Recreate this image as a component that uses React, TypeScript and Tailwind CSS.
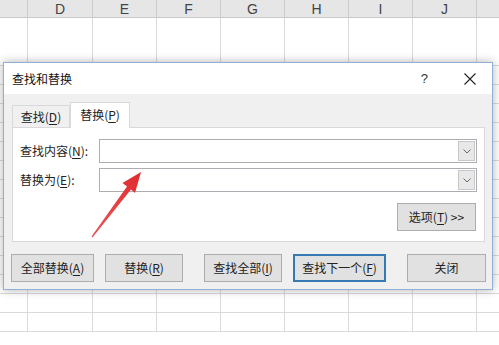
import React from "react";

const cols = [
  { name: "", w: "w-[28px]" },
  { name: "D", w: "w-[65px]" },
  { name: "E", w: "w-[64px]" },
  { name: "F", w: "w-[64px]" },
  { name: "G", w: "w-[64px]" },
  { name: "H", w: "w-[64px]" },
  { name: "I", w: "w-[64px]" },
  { name: "J", w: "w-[64px]" },
  { name: "", w: "w-[40px]" },
];

const rowHeights = ["h-[48px]", ...Array(14).fill("h-[19px]")];

const font = { fontFamily: '"Noto Sans CJK SC", "Noto Sans", sans-serif' };

const Sheet = () => (
  <div className="flex flex-col">
    <div className="flex h-[18px] bg-[#e6e6e6] border-b border-[#c9c9c9]">
      {cols.map((c, i) => (
        <div
          key={i}
          className={`${c.w} shrink-0 border-r border-[#cdcdcd] flex items-center justify-center text-[14px] text-[#444] leading-none`}
          style={{ fontFamily: '"Liberation Sans", sans-serif' }}
        >
          {c.name}
        </div>
      ))}
    </div>
    {rowHeights.map((h, r) => (
      <div key={r} className={`flex ${h} border-b border-[#dadada]`}>
        {cols.map((c, i) => (
          <div key={i} className={`${c.w} shrink-0 border-r border-[#dadada]`} />
        ))}
      </div>
    ))}
  </div>
);

const Combo = () => (
  <div className="flex w-[378px] h-[24px] border border-[#abadb3] bg-white">
    <div className="flex-1" />
    <div className="w-[17px] m-[1px] ml-0 bg-[#e8e8e8] border border-[#c8c8c8] flex items-center justify-center">
      <svg width="8" height="5" viewBox="0 0 8 5">
        <path d="M0.5 0.5 L4 4 L7.5 0.5" fill="none" stroke="#666" strokeWidth="1" />
      </svg>
    </div>
  </div>
);

const Btn = ({ children, className = "", focus = false }: { children: React.ReactNode; className?: string; focus?: boolean }) => (
  <div
    className={`h-[28px] flex items-center justify-center text-[12px] text-[#222] bg-[#e1e1e1] ${
      focus ? "border-2 border-[#3679b5]" : "border border-[#adadad]"
    } ${className}`}
  >
    {children}
  </div>
);

const U = ({ children }: { children: React.ReactNode }) => <span className="underline underline-offset-2">{children}</span>;

const Dialog = () => (
  <div
    className="absolute left-[3px] top-[62px] w-[490px] h-[228px] border border-[#8fb0d3] bg-[#f0f0f0] shadow-[0_0_9px_rgba(0,0,0,0.3)] flex flex-col"
    style={font}
  >
    <div className="h-[31px] bg-white flex items-center pl-[8px] pr-[16px] text-[12px] text-[#111]">
      <span className="flex-1">查找和替换</span>
      <span className="text-[13px] text-[#333] mr-[36px]" style={{ fontFamily: '"Liberation Sans", sans-serif' }}>?</span>
      <svg width="12" height="12" viewBox="0 0 12 12">
        <path d="M0.5 0.5 L11.5 11.5 M11.5 0.5 L0.5 11.5" stroke="#222" strokeWidth="1.1" />
      </svg>
    </div>
    <div className="pl-[8px] pr-[7px] pt-[8px] flex flex-col">
      <div className="flex items-end h-[25px] relative z-10">
        <div className="w-[58px] h-[22px] -mb-[0px] border border-b-0 border-[#d9d9d9] bg-[#f0f0f0] flex items-center justify-center text-[12px] text-[#222]">
          查找(<U>D</U>)
        </div>
        <div className="w-[60px] h-[26px] -mb-[1px] border border-b-0 border-[#d9d9d9] bg-white flex items-center justify-center text-[12px] text-[#222] pb-[2px]">
          替换(<U>P</U>)
        </div>
      </div>
      <div className="h-[115px] border border-[#d9d9d9] bg-white flex flex-col pt-[11px] pl-[7px] pr-[7px]">
        <div className="flex items-center h-[24px]">
          <span className="w-[79px] text-[12px] text-[#222]">查找内容(<U>N</U>):</span>
          <Combo />
        </div>
        <div className="flex items-center h-[24px] mt-[5px]">
          <span className="w-[79px] text-[12px] text-[#222]">替换为(<U>E</U>):</span>
          <Combo />
        </div>
        <div className="flex justify-end mt-[11px] pr-[1px]">
          <Btn className="w-[79px]">
            选项(<U>T</U>)&nbsp;&gt;&gt;
          </Btn>
        </div>
      </div>
    </div>
    <div className="flex mt-[12px] pl-[7px]">
      <Btn className="w-[83px]">全部替换(<U>A</U>)</Btn>
      <Btn className="w-[78px] ml-[11px]">替换(<U>R</U>)</Btn>
      <Btn className="w-[78px] ml-[21px]">查找全部(<U>I</U>)</Btn>
      <Btn className="w-[93px] ml-[11px]" focus>查找下一个(<U>F</U>)</Btn>
      <Btn className="w-[79px] ml-[21px]">关闭</Btn>
    </div>
  </div>
);

const Arrow = () => (
  <svg className="absolute left-0 top-0 pointer-events-none" width="499" height="345" viewBox="0 0 499 345">
    <defs>
      <linearGradient id="ag" x1="92" y1="237" x2="141" y2="172" gradientUnits="userSpaceOnUse">
        <stop offset="0" stopColor="#e8585a" />
        <stop offset="1" stopColor="#e02a2e" />
      </linearGradient>
    </defs>
    <polygon
      points="141,172 135,193 131,189.5 92.5,237.5 91.5,236.5 127,186.5 122.5,183"
      fill="url(#ag)"
    />
  </svg>
);

export default function App() {
  return (
    <div className="relative w-[499px] h-[345px] overflow-hidden bg-white">
      <Sheet />
      <Dialog />
      <Arrow />
    </div>
  );
}
